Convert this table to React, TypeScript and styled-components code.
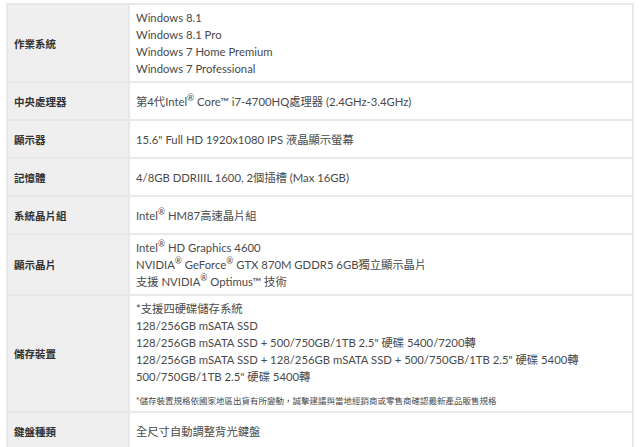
import React from "react";
import styled, { createGlobalStyle } from "styled-components";

const GlobalStyle = createGlobalStyle`
  body {
    margin: 0;
    background: #ffffff;
    font-family: Lato, "Noto Sans CJK TC", sans-serif;
  }
`;

interface SpecRow {
  label: string;
  lines: React.ReactNode[];
  note?: string;
}

const R = () => <Sup>®</Sup>;

const specs: SpecRow[] = [
  {
    label: "作業系統",
    lines: ["Windows 8.1", "Windows 8.1 Pro", "Windows 7 Home Premium", "Windows 7 Professional"],
  },
  {
    label: "中央處理器",
    lines: [
      <>
        第4代Intel<R /> Core™ i7-4700HQ處理器 (2.4GHz-3.4GHz)
      </>,
    ],
  },
  { label: "顯示器", lines: ['15.6" Full HD 1920x1080 IPS 液晶顯示螢幕'] },
  { label: "記憶體", lines: ["4/8GB DDRIIIL 1600, 2個插槽 (Max 16GB)"] },
  {
    label: "系統晶片組",
    lines: [
      <>
        Intel<R /> HM87高速晶片組
      </>,
    ],
  },
  {
    label: "顯示晶片",
    lines: [
      <>
        Intel<R /> HD Graphics 4600
      </>,
      <>
        NVIDIA<R /> GeForce<R /> GTX 870M GDDR5 6GB獨立顯示晶片
      </>,
      <>
        支援 NVIDIA<R /> Optimus™ 技術
      </>,
    ],
  },
  {
    label: "儲存裝置",
    lines: [
      "*支援四硬碟儲存系統",
      "128/256GB mSATA SSD",
      '128/256GB mSATA SSD + 500/750GB/1TB 2.5" 硬碟 5400/7200轉',
      '128/256GB mSATA SSD + 128/256GB mSATA SSD + 500/750GB/1TB 2.5" 硬碟 5400轉',
      '500/750GB/1TB 2.5" 硬碟 5400轉',
    ],
    note: "*儲存裝置規格依國家地區出貨有所變動，誠摯建議與當地經銷商或零售商確認最新產品販售規格",
  },
  { label: "鍵盤種類", lines: ["全尺寸自動調整背光鍵盤"] },
];

export default function App() {
  return (
    <>
      <GlobalStyle />
      <Page>
        <SpecTable>
          <tbody>
            {specs.map((row) => (
              <tr key={row.label}>
                <LabelCell>{row.label}</LabelCell>
                <ValueCell>
                  {row.lines.map((line, i) => (
                    <Line key={i}>{line}</Line>
                  ))}
                  {row.note && <Note>{row.note}</Note>}
                </ValueCell>
              </tr>
            ))}
          </tbody>
        </SpecTable>
      </Page>
    </>
  );
}

const Page = styled.div`
  padding: 3px 6px 0 6px;
`;

const SpecTable = styled.table`
  width: 628px;
  border-collapse: collapse;
  table-layout: fixed;
`;

const Cell = styled.td`
  border: 2px solid #e8e8e8;
  height: 28px;
  padding: 4px 6px;
  vertical-align: middle;
`;

const LabelCell = styled(Cell)`
  width: 108px;
  background: #efefef;
  color: #333333;
  font-size: 10.5px;
  font-weight: 700;
`;

const ValueCell = styled(Cell)`
  background: #ffffff;
  color: #4a4a4a;
  font-size: 11.3px;
`;

const Line = styled.div`
  line-height: 17px;
  white-space: nowrap;
`;

const Sup = styled.sup`
  font-size: 8.5px;
  line-height: 0;
  vertical-align: 5px;
`;

const Note = styled.div`
  margin-top: 10px;
  font-size: 8.5px;
  line-height: 12px;
  color: #4a4a4a;
  white-space: nowrap;
`;
